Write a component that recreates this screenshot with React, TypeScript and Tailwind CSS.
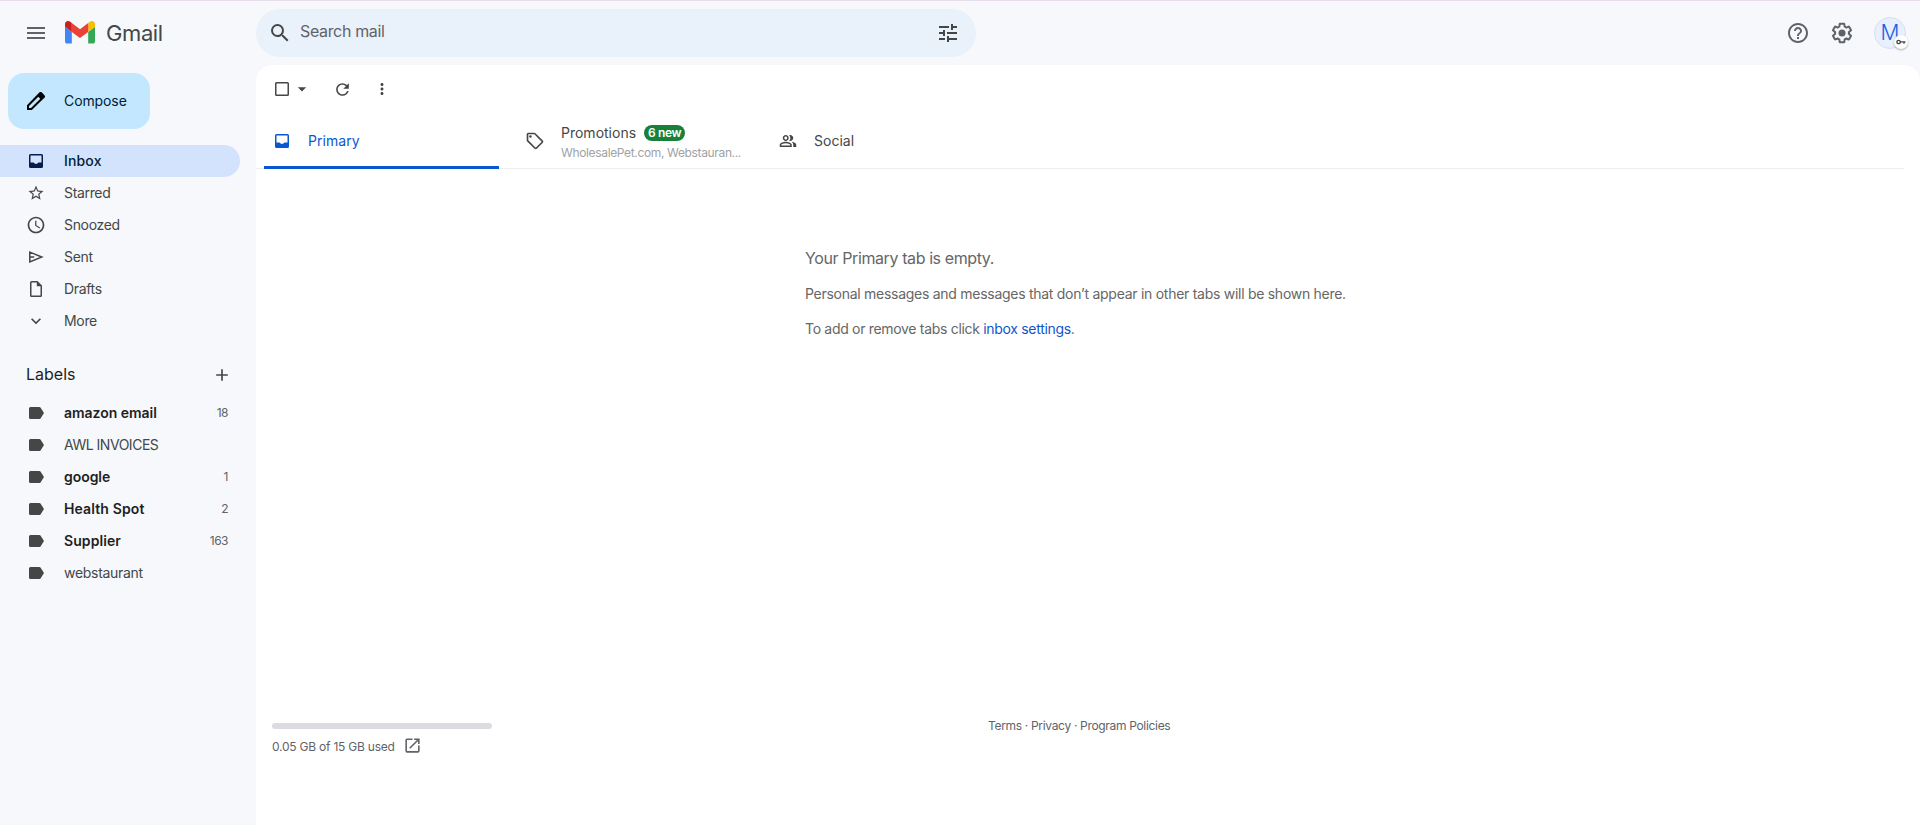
import type { ReactNode } from "react";
import {
  MdAccessTime,
  MdAdd,
  MdArrowDropDown,
  MdHelpOutline,
  MdKeyboardArrowDown,
  MdMenu,
  MdMoreVert,
  MdOpenInNew,
  MdOutlinePeopleAlt,
  MdOutlineSell,
  MdRefresh,
  MdSearch,
  MdStarOutline,
  MdTune,
} from "react-icons/md";

type NavItem = {
  label: string;
  icon: ReactNode;
};

type LabelItem = {
  name: string;
  tracking: string;
  count?: number;
};

function GmailLogo() {
  return (
    <svg viewBox="52 42 88 66" className="h-[22.5px] w-[30px]">
      <path fill="#4285f4" d="M58 108h14V74L52 59v43c0 3.32 2.69 6 6 6" />
      <path fill="#34a853" d="M120 108h14c3.32 0 6-2.69 6-6V59l-20 15" />
      <path fill="#fbbc04" d="M120 48v26l20-15v-8c0-7.42-8.47-11.65-14.4-7.2" />
      <path fill="#ea4335" d="M72 74V48l24 18 24-18v26L96 92" />
      <path fill="#c5221f" d="M52 51v8l20 15V48l-5.6-4.2c-5.94-4.45-14.4-.22-14.4 7.2" />
    </svg>
  );
}

function InboxIcon() {
  return (
    <svg viewBox="0 0 14 14" className="size-3.5" fill="currentColor">
      <path
        fillRule="evenodd"
        d="M1.5 0h11A1.5 1.5 0 0 1 14 1.5v11a1.5 1.5 0 0 1-1.5 1.5h-11A1.5 1.5 0 0 1 0 12.5v-11A1.5 1.5 0 0 1 1.5 0zM1.5 1.5v7H4.6a2.7 2.7 0 0 0 4.8 0h3.1v-7z"
      />
    </svg>
  );
}

function DraftIcon() {
  return (
    <svg viewBox="0 0 12 16" className="h-4 w-3" fill="currentColor">
      <path
        fillRule="evenodd"
        d="M1.5 0H7.5L12 4.5v10a1.5 1.5 0 0 1-1.5 1.5h-9A1.5 1.5 0 0 1 0 14.5v-13A1.5 1.5 0 0 1 1.5 0zM1.5 1.5v13h9V5.3H6.8V1.5z"
      />
    </svg>
  );
}

function SendIcon() {
  return (
    <svg viewBox="0 0 15 12" className="h-3 w-[15px]" fill="none" stroke="currentColor" strokeWidth="1.5">
      <path d="M.8 1.1 12.8 6 .8 10.9z" />
      <path d="M.8 6h4.4" />
    </svg>
  );
}

function PencilIcon() {
  return (
    <svg viewBox="0 0 18 18" className="size-[18px]" fill="currentColor">
      <path
        fillRule="evenodd"
        d="M17.4 3.2 14.9.6a1.8 1.8 0 0 0-2.6 0L0 13.2V18h4.8L17.4 5.8a1.8 1.8 0 0 0 0-2.6zM4 16H2v-2l9.3-9.3 2 2z"
      />
    </svg>
  );
}

function LabelIcon() {
  return (
    <svg viewBox="0 0 15 12" className="h-3 w-[15px]" fill="currentColor">
      <path d="M1.5 0h8.8c.5 0 1 .25 1.2.6L15 6l-3.5 5.4c-.2.35-.7.6-1.2.6H1.5A1.5 1.5 0 0 1 0 10.5v-9A1.5 1.5 0 0 1 1.5 0z" />
    </svg>
  );
}

function KeyIcon() {
  return (
    <svg viewBox="0 0 10 6" className="h-1.5 w-2.5" fill="none" stroke="currentColor" strokeWidth="1.3">
      <circle cx="2.6" cy="3" r="1.7" />
      <path d="M4.3 2.8h5.2M8 2.8v2" />
    </svg>
  );
}

function GearIcon() {
  return (
    <svg viewBox="0 0 24 24" className="size-6" fill="currentColor">
      <path d="M13.85 22.25h-3.7c-.74 0-1.36-.54-1.45-1.27l-.27-1.89c-.27-.14-.53-.29-.79-.46l-1.8.72c-.7.26-1.47-.03-1.81-.65L2.2 15.53c-.35-.66-.2-1.44.36-1.88l1.53-1.19c-.01-.15-.02-.3-.02-.46 0-.15.01-.31.02-.46l-1.52-1.19c-.59-.45-.74-1.26-.37-1.88l1.85-3.19c.34-.62 1.11-.9 1.79-.63l1.81.73c.26-.17.52-.32.78-.46l.27-1.91c.09-.7.71-1.25 1.44-1.25h3.7c.74 0 1.36.54 1.45 1.27l.27 1.89c.27.14.53.29.79.46l1.8-.72c.71-.26 1.48.03 1.82.65l1.84 3.18c.36.66.2 1.44-.36 1.88l-1.52 1.19c.01.15.02.3.02.46s-.01.31-.02.46l1.52 1.19c.56.45.72 1.23.37 1.86l-1.86 3.22c-.34.62-1.11.9-1.8.63l-1.8-.72c-.26.17-.52.32-.78.46l-.27 1.91c-.1.68-.72 1.22-1.46 1.22zm-3.23-2h2.76l.37-2.55.53-.22c.44-.18.88-.44 1.34-.78l.45-.34 2.38.96 1.38-2.4-2.03-1.58.07-.56c.03-.26.06-.51.06-.78s-.03-.53-.06-.78l-.07-.56 2.03-1.58-1.39-2.4-2.39.96-.45-.35c-.42-.32-.87-.58-1.33-.77l-.52-.22-.37-2.55h-2.76l-.37 2.55-.53.21c-.44.19-.88.44-1.34.79l-.45.33-2.38-.95-1.39 2.39 2.03 1.58-.07.56a7 7 0 0 0-.06.79c0 .26.02.53.06.78l.07.56-2.03 1.58 1.38 2.4 2.39-.96.45.35c.43.33.86.58 1.33.77l.53.22z" />
      <circle cx="12" cy="12" r="3.5" />
    </svg>
  );
}

const navItems: NavItem[] = [
  { label: "Starred", icon: <MdStarOutline className="size-[18px]" /> },
  { label: "Snoozed", icon: <MdAccessTime className="size-5" /> },
  { label: "Sent", icon: <SendIcon /> },
  { label: "Drafts", icon: <DraftIcon /> },
  { label: "More", icon: <MdKeyboardArrowDown className="size-5" /> },
];

const labels: LabelItem[] = [
  { name: "amazon email", count: 18, tracking: "tracking-[-0.03px]" },
  { name: "AWL INVOICES", tracking: "tracking-[-0.48px]" },
  { name: "google", count: 1, tracking: "tracking-[-0.05px]" },
  { name: "Health Spot", count: 2, tracking: "tracking-[0.12px]" },
  { name: "Supplier", count: 163, tracking: "tracking-[0.08px]" },
  { name: "webstaurant", tracking: "tracking-[-0.3px]" },
];

function Header() {
  return (
    <header className="flex h-16 shrink-0 items-center border-t border-[#e9dfec]">
      <div className="flex w-64 shrink-0 items-center pl-6">
        <MdMenu className="size-6 text-[#5f6368]" />
        <div className="ml-[17px] flex items-center">
          <GmailLogo />
          <span className="ml-[11px] text-[22px] leading-6 tracking-[-0.4px] text-[#444746]">Gmail</span>
        </div>
      </div>
      <div className="flex h-12 w-[720px] items-center rounded-full bg-[#e9f1fb] pr-4 pl-3 text-[#444746]">
        <MdSearch className="size-6" />
        <span className="mb-[3px] ml-2 flex-1 text-base tracking-[-0.35px] text-[#5f6368]">Search mail</span>
        <MdTune className="size-6" />
      </div>
      <div className="ml-auto flex items-center pr-3.5 text-[#5f6368]">
        <MdHelpOutline className="size-6" />
        <div className="ml-5">
          <GearIcon />
        </div>
        <div className="relative ml-5 flex size-8 items-center justify-center rounded-full border border-[#d2e0f5] bg-[#e8f0fe] text-[21px] font-light text-[#1a5fe8]">
          M
          <span className="absolute -right-[3px] -bottom-px flex size-3.5 items-center justify-center rounded-full bg-white text-[#444746] shadow-[0_1px_2px_rgba(0,0,0,0.3)]">
            <KeyIcon />
          </span>
        </div>
      </div>
    </header>
  );
}

function Sidebar() {
  return (
    <aside className="w-64 shrink-0 text-sm text-[#444746]">
      <button className="mt-[9px] ml-2 flex h-14 w-[142px] items-center rounded-2xl bg-[#c2e7ff] pl-[19px] text-[#001d35]">
        <span className="text-black">
          <PencilIcon />
        </span>
        <span className="ml-[19px] tracking-[-0.1px]">Compose</span>
      </button>

      <nav className="mt-4">
        <a className="flex h-8 w-60 items-center rounded-r-full bg-[#d3e3fd] font-medium text-[#001d35]">
          <span className="ml-6 flex w-6 justify-center text-[#041e49]">
            <InboxIcon />
          </span>
          <span className="ml-4 tracking-[0.15px]">Inbox</span>
        </a>
        {navItems.map((item) => (
          <a key={item.label} className="flex h-8 items-center">
            <span className="ml-6 flex w-6 justify-center">{item.icon}</span>
            <span className="ml-4 tracking-[-0.33px]">{item.label}</span>
          </a>
        ))}
      </nav>

      <div className="mt-[22px] flex h-8 items-center justify-between pr-6 pl-[26px]">
        <h2 className="mb-0.5 text-base text-[#1f1f1f]">Labels</h2>
        <MdAdd className="size-5" />
      </div>

      <div className="mt-1.5">
        {labels.map((label) => (
          <a key={label.name} className="flex h-8 items-center pr-7">
            <span className="ml-6 flex w-6 justify-center">
              <LabelIcon />
            </span>
            <span className={`ml-4 flex-1 ${label.tracking} ${label.count ? "font-semibold text-[#1f1f1f]" : ""}`}>
              {label.name}
            </span>
            <span className="text-xs tracking-[-0.5px] text-[#5f6368]">{label.count}</span>
          </a>
        ))}
      </div>
    </aside>
  );
}

function Toolbar() {
  return (
    <div className="flex h-12 items-center text-[#444746]">
      <svg viewBox="0 0 14 14" className="ml-[19px] size-3.5" fill="none" stroke="currentColor" strokeWidth="1.5">
        <rect x=".75" y=".75" width="12.5" height="12.5" rx=".8" />
      </svg>
      <MdArrowDropDown className="ml-[3px] size-5" />
      <MdRefresh className="ml-[21px] size-[19px]" />
      <MdMoreVert className="ml-[21px] size-[18px]" />
    </div>
  );
}

function Tabs() {
  return (
    <div className="mr-4 flex h-14 border-b border-[#eceff1] text-sm text-[#444746]">
      <div className="-mb-px ml-2 flex w-[235px] items-center border-b-[3px] border-[#0b57d0] pt-0.5 pl-[11px] text-[#0b57d0]">
        <InboxIcon />
        <span className="ml-[19px] tracking-[0.05px]">Primary</span>
      </div>
      <div className="flex w-[253px] items-center pl-[26px]">
        <MdOutlineSell className="size-5 shrink-0" />
        <div className="mt-0.5 ml-4 min-w-0">
          <div className="flex items-center">
            <span>Promotions</span>
            <span className="ml-2 flex h-4 items-center rounded-full bg-[#188038] px-1 text-xs font-semibold tracking-[-0.35px] text-white">
              6 new
            </span>
          </div>
          <p className="mt-0.5 -mb-px whitespace-nowrap text-xs tracking-[-0.35px] text-[#a0a2a4]">
            WholesalePet.com, Webstauran...
          </p>
        </div>
      </div>
      <div className="flex items-center pl-[27px]">
        <MdOutlinePeopleAlt className="size-[18px]" />
        <span className="ml-[17px]">Social</span>
      </div>
    </div>
  );
}

function EmptyState() {
  return (
    <div className="mt-[77px] ml-[549px] text-[#666]">
      <p className="text-base leading-6 tracking-[-0.4px]">Your Primary tab is empty.</p>
      <p className="mt-3.5 text-sm tracking-[-0.275px]">
        Personal messages and messages that don’t appear in other tabs will be shown here.
      </p>
      <p className="mt-[15px] text-sm tracking-[-0.31px]">
        To add or remove tabs click <a className="text-[#1155cc]">inbox settings</a>.
      </p>
    </div>
  );
}

function Footer() {
  return (
    <footer className="mt-auto mb-[70px] flex text-xs text-[#5f6368]">
      <div className="ml-4 w-[716px]">
        <div className="mt-1.5 h-1.5 w-[220px] rounded-full bg-[#dadce0]" />
        <div className="mt-2.5 flex items-center">
          <span className="tracking-[-0.22px]">0.05 GB of 15 GB used</span>
          <MdOpenInNew className="-mt-1 ml-2 size-[19px]" />
        </div>
      </div>
      <p className="mt-px tracking-[-0.32px]">Terms · Privacy · Program Policies</p>
    </footer>
  );
}

export default function App() {
  return (
    <div className="flex h-[825px] w-[1920px] flex-col overflow-hidden bg-[#f6f8fc] font-['Inter',sans-serif]">
      <Header />
      <div className="flex min-h-0 flex-1">
        <Sidebar />
        <main className="mt-px flex flex-1 flex-col rounded-t-2xl bg-white">
          <Toolbar />
          <Tabs />
          <EmptyState />
          <Footer />
        </main>
      </div>
    </div>
  );
}
